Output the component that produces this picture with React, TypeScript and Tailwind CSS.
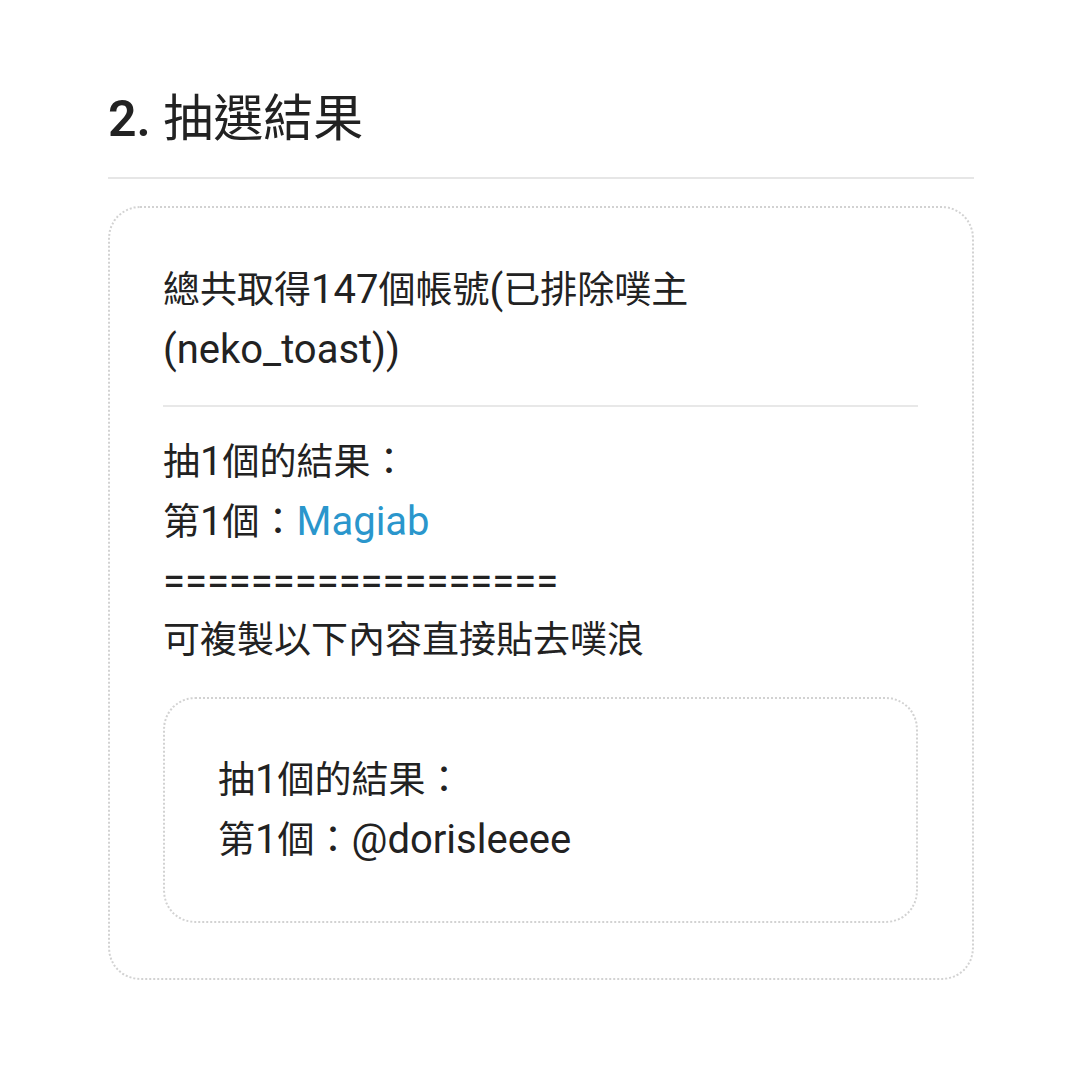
export default function App() {
  return (
    <div
      className="w-[1080px] h-[1080px] bg-white text-[#222] pl-[108px] pr-[106px] pt-[86px]"
      style={{ fontFamily: 'Roboto, "Noto Sans CJK TC", sans-serif' }}
    >
      {/* Section title */}
      <h2 className="text-[50px] leading-[66px] pb-[25px] border-b-2 border-[#e6e6e6]">
        <span className="font-semibold">2.</span> 抽選結果
      </h2>

      {/* Result card */}
      <div className="mt-[27px] border-2 border-dotted border-[#d2d2d2] rounded-[32px] pl-[53px] pr-[54px] pt-[52px] pb-[55px] text-[37px] leading-[59px]">
        <p>
          總共取得<span className="text-[40px]">147</span>個帳號<span className="text-[40px]">(</span>已排除噗主
          <br />
          <span className="text-[40px]">(neko_toast))</span>
        </p>
        <div className="my-[25px] border-t-2 border-[#e8e8e8]" />
        <p>
          抽<span className="text-[40px]">1</span>個的結果：
        </p>
        <p>
          第<span className="text-[40px]">1</span>個：
          <span className="text-[40px] text-[#2a96cc]">Magiab</span>
        </p>
        <p className="text-[40px]">==================</p>
        <p>可複製以下內容直接貼去噗浪</p>

        {/* Copy block */}
        <div className="mt-[27px] border-2 border-dotted border-[#d2d2d2] rounded-[32px] px-[53px] pt-[51px] pb-[51px]">
          <p>
            抽<span className="text-[40px]">1</span>個的結果：
          </p>
          <p>
            第<span className="text-[40px]">1</span>個：<span className="text-[40px]">@dorisleeee</span>
          </p>
        </div>
      </div>
    </div>
  );
}
